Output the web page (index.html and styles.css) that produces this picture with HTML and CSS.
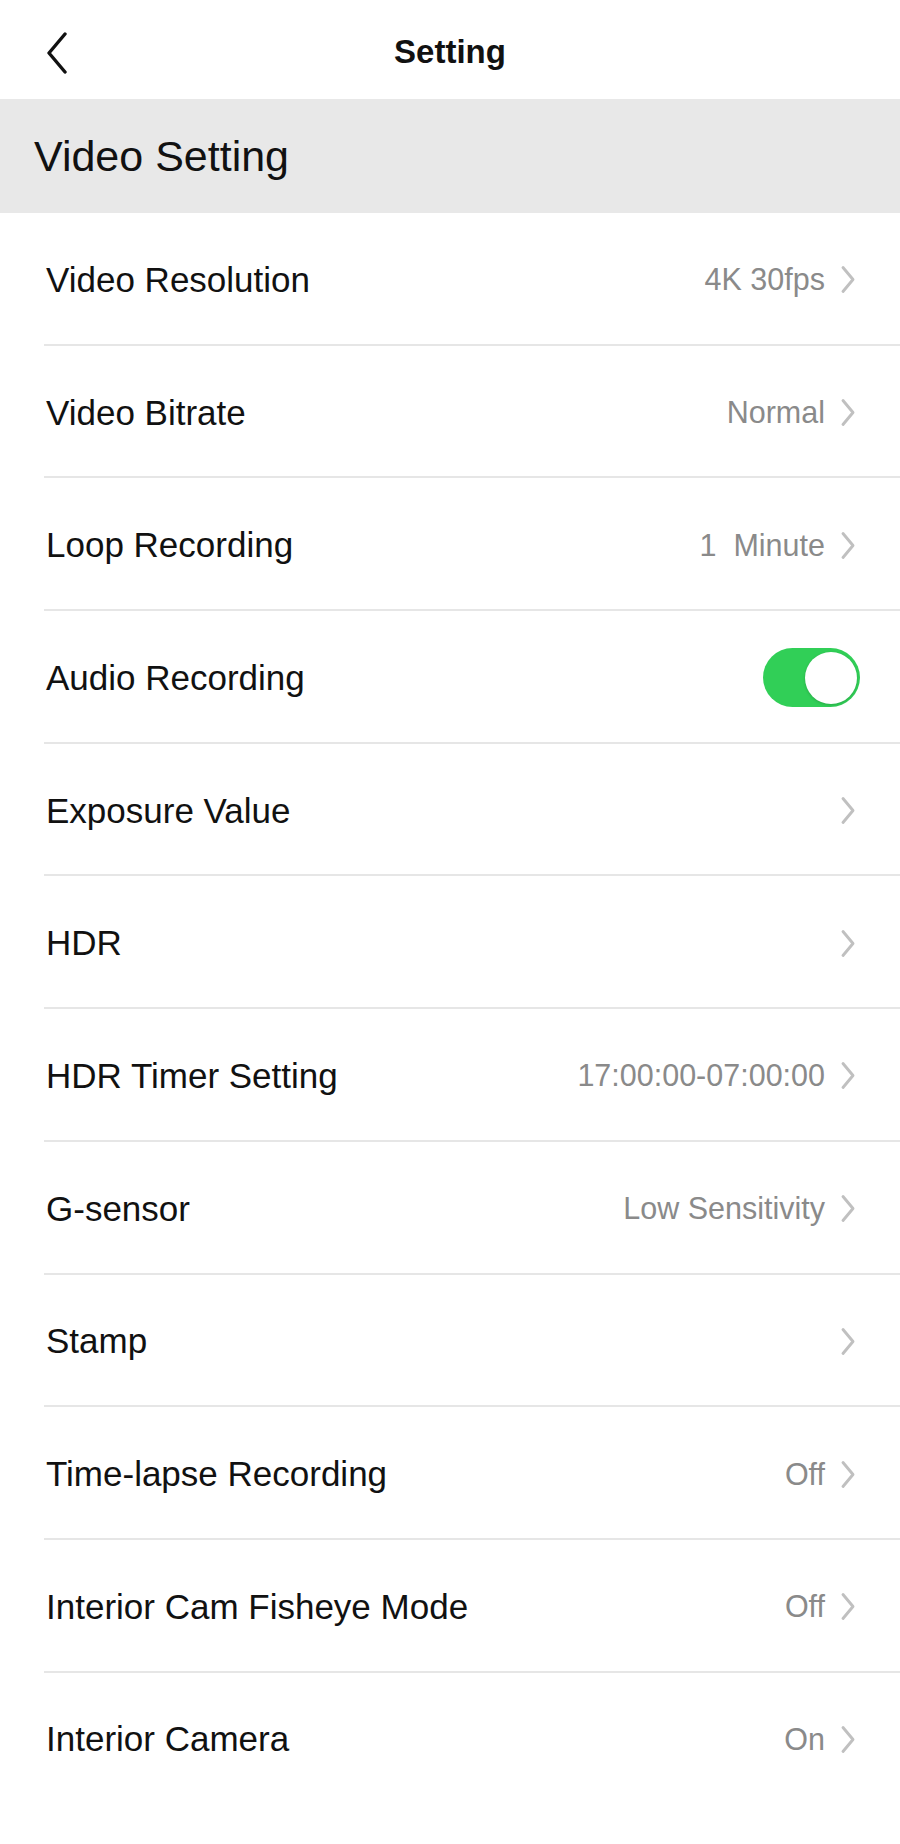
FILE: index.html
```html
<!DOCTYPE html>
<html lang="en">
<head>
<meta charset="utf-8">
<title>Setting</title>
<link rel="stylesheet" href="styles.css">
</head>
<body>
<div class="page">
  <header class="topbar">
    <div class="back">
      <svg width="24" height="42" viewBox="0 0 24 42"><path d="M20 2 L4 21 L20 40" fill="none" stroke="#111" stroke-width="3.4" stroke-linecap="round" stroke-linejoin="round"/></svg>
    </div>
    <div class="title">Setting</div>
    <div></div>
  </header>
  <div class="section">Video Setting</div>
  <ul class="list">
    <li class="row"><span class="label">Video Resolution</span><span class="right"><span class="value">4K 30fps</span><svg class="chev" viewBox="0 0 16 28"><path d="M3 2 L13 14 L3 26" /></svg></span></li>
    <li class="row"><span class="label">Video Bitrate</span><span class="right"><span class="value">Normal</span><svg class="chev" viewBox="0 0 16 28"><path d="M3 2 L13 14 L3 26" /></svg></span></li>
    <li class="row"><span class="label">Loop Recording</span><span class="right"><span class="value">1&nbsp; Minute</span><svg class="chev" viewBox="0 0 16 28"><path d="M3 2 L13 14 L3 26" /></svg></span></li>
    <li class="row"><span class="label">Audio Recording</span><span class="right"><span class="toggle"><span class="knob"></span></span></span></li>
    <li class="row"><span class="label">Exposure Value</span><span class="right"><svg class="chev" viewBox="0 0 16 28"><path d="M3 2 L13 14 L3 26" /></svg></span></li>
    <li class="row"><span class="label">HDR</span><span class="right"><svg class="chev" viewBox="0 0 16 28"><path d="M3 2 L13 14 L3 26" /></svg></span></li>
    <li class="row"><span class="label">HDR Timer Setting</span><span class="right"><span class="value">17:00:00-07:00:00</span><svg class="chev" viewBox="0 0 16 28"><path d="M3 2 L13 14 L3 26" /></svg></span></li>
    <li class="row"><span class="label">G-sensor</span><span class="right"><span class="value">Low Sensitivity</span><svg class="chev" viewBox="0 0 16 28"><path d="M3 2 L13 14 L3 26" /></svg></span></li>
    <li class="row"><span class="label">Stamp</span><span class="right"><svg class="chev" viewBox="0 0 16 28"><path d="M3 2 L13 14 L3 26" /></svg></span></li>
    <li class="row"><span class="label">Time-lapse Recording</span><span class="right"><span class="value">Off</span><svg class="chev" viewBox="0 0 16 28"><path d="M3 2 L13 14 L3 26" /></svg></span></li>
    <li class="row"><span class="label">Interior Cam Fisheye Mode</span><span class="right"><span class="value">Off</span><svg class="chev" viewBox="0 0 16 28"><path d="M3 2 L13 14 L3 26" /></svg></span></li>
    <li class="row last"><span class="label">Interior Camera</span><span class="right"><span class="value">On</span><svg class="chev" viewBox="0 0 16 28"><path d="M3 2 L13 14 L3 26" /></svg></span></li>
  </ul>
</div>
</body>
</html>
```
FILE: styles.css
```css
html, body {
  margin: 0;
  padding: 0;
  background: #ffffff;
}
body {
  font-family: "Liberation Sans", Arial, sans-serif;
  color: #111111;
}
.page {
  width: 900px;
  min-height: 1844px;
  background: #ffffff;
}
.topbar {
  height: 99px;
  display: grid;
  grid-template-columns: 1fr auto 1fr;
  align-items: center;
}
.back {
  padding-left: 45px;
  display: flex;
  align-items: center;
  height: 42px;
  margin-top: 6px;
}
.title {
  font-size: 33px;
  font-weight: bold;
  color: #111;
  margin-top: 4px;
}
.section {
  height: 114px;
  background: #e8e8e8;
  display: flex;
  align-items: center;
  padding-left: 34px;
  font-size: 43px;
  color: #111;
}
.list {
  list-style: none;
  margin: 0;
  padding: 0;
}
.row {
  margin-left: 44px;
  height: 130.7px;
  border-bottom: 2px solid #e6e6e6;
  display: flex;
  align-items: center;
  justify-content: space-between;
  padding-left: 2px;
  padding-right: 44px;
}
.row.last {
  border-bottom: none;
}
.label {
  font-size: 35px;
  color: #111;
  margin-top: 3px;
}
.right {
  display: flex;
  align-items: center;
  gap: 15px;
  margin-top: 3px;
}
.value {
  font-size: 30.5px;
  color: #8a8a8a;
}
.chev {
  width: 16px;
  height: 29px;
  fill: none;
  stroke: #c0c0c0;
  stroke-width: 2.9;
  stroke-linecap: round;
  stroke-linejoin: round;
}
.toggle {
  width: 97px;
  height: 59px;
  border-radius: 30px;
  background: #31cf57;
  display: flex;
  align-items: center;
  justify-content: flex-end;
  padding-right: 3px;
  box-sizing: border-box;
  margin-right: -4px;
}
.knob {
  width: 52px;
  height: 52px;
  border-radius: 50%;
  background: #ffffff;
  box-shadow: 0 1px 3px rgba(0,0,0,0.18);
}
```
